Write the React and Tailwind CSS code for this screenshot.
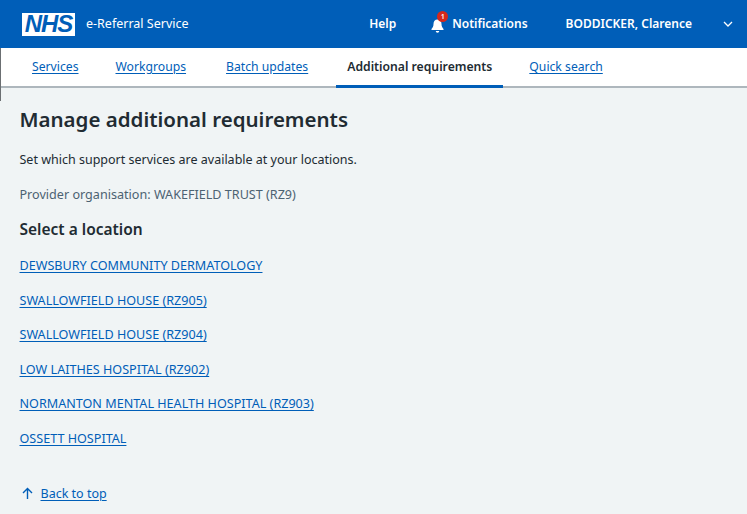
const font = { fontFamily: '"Noto Sans", sans-serif' };

const locations = [
  "DEWSBURY COMMUNITY DERMATOLOGY",
  "SWALLOWFIELD HOUSE (RZ905)",
  "SWALLOWFIELD HOUSE (RZ904)",
  "LOW LAITHES HOSPITAL (RZ902)",
  "NORMANTON MENTAL HEALTH HOSPITAL (RZ903)",
  "OSSETT HOSPITAL",
];

function Bell() {
  return (
    <span className="relative block w-[20px] h-[20px]">
      <svg width="13" height="14" viewBox="0 0 13 14" className="absolute left-0 top-[5px]" fill="#fff">
        <path d="M6.5 0.5c2.6 0 4 2 4 4.5 0 2.6 1 3.8 2 5v1H0.5v-1c1-1.200 2-2.400 2-5 0-2.500 1.400-4.500 4-4.500z" />
        <path d="M4.800 12h3.400c0 1-0.700 1.700-1.700 1.700S4.800 13 4.800 12z" />
      </svg>
      <span className="absolute left-[6px] top-[-3px] flex h-[11px] w-[11px] items-center justify-center rounded-full bg-[#d5281b] text-[7px] leading-none text-white">1</span>
    </span>
  );
}

export default function App() {
  return (
    <div className="relative h-[514px] w-[747px] overflow-hidden bg-[#f0f4f5] text-[#212b32]" style={font}>
      <div className="absolute left-0 top-[48px] h-[53px] w-px bg-[#6b6f72]" />
      <header className="flex h-[48px] items-center bg-[#005eb8] pl-[22px] text-white">
        <div className="flex h-[23px] w-[53px] items-center justify-center bg-white">
          <span className="text-[24px] font-bold italic leading-none tracking-[-1px] text-[#005eb8]" style={{ fontFamily: '"Liberation Sans", sans-serif' }}>NHS</span>
        </div>
        <span className="ml-[11px] text-[12.5px]">e-Referral Service</span>
        <nav className="ml-auto flex items-center text-[12px] font-semibold">
          <span>Help</span>
          <span className="ml-[35px] flex items-center gap-px"><Bell /><span>Notifications</span></span>
          <span className="ml-[38px]">BODDICKER, Clarence</span>
          <svg width="10" height="6" viewBox="0 0 10 6" className="ml-[31px] mr-[14px]" fill="none" stroke="#fff" strokeWidth="1.300"><path d="M1 1l4 4 4-4" /></svg>
        </nav>
      </header>
      <div className="flex h-[40px] items-stretch border-b-2 border-b-[#aeb7bd] bg-white pl-[32px] text-[12.2px]">
        <a className="mt-[10px] text-[#005eb8] underline underline-offset-2">Services</a>
        <a className="ml-[37px] mt-[10px] text-[#005eb8] underline underline-offset-2">Workgroups</a>
        <a className="ml-[40px] mt-[10px] text-[#005eb8] underline underline-offset-2">Batch updates</a>
        <span className="ml-[28px] mb-[-2px] border-b-[3px] border-[#005eb8] px-[11px] pt-[10px] font-semibold">Additional requirements</span>
        <a className="ml-[26px] mt-[10px] text-[#005eb8] underline underline-offset-2">Quick search</a>
      </div>
      <main className="pl-[19.500px] pt-[16px]">
        <h1 className="text-[20.500px] font-semibold leading-[30px]">Manage additional requirements</h1>
        <p className="mt-[17px] text-[12.500px] leading-[18px]">Set which support services are available at your locations.</p>
        <p className="mt-[17px] text-[12.600px] leading-[18px] text-[#4c6272]">Provider organisation: WAKEFIELD TRUST (RZ9)</p>
        <h2 className="mt-[13px] text-[15.500px] font-semibold leading-[24px]">Select a location</h2>
        <ul className="mt-[16px] flex flex-col gap-[16.600px]">
          {locations.map((l) => (
            <li key={l} className="text-[12.600px] leading-[18px]"><a className="text-[#005eb8] underline underline-offset-2">{l}</a></li>
          ))}
        </ul>
        <div className="mt-[37px] flex items-center text-[12.500px] leading-[18px] text-[#005eb8]">
          <svg width="13" height="13" viewBox="0 0 13 13" className="ml-[1px]" fill="none" stroke="#005eb8" strokeWidth="1.400"><path d="M6.500 12V2M2 6l4.500-4.500L11 6" /></svg>
          <a className="ml-[7px] underline underline-offset-2">Back to top</a>
        </div>
      </main>
    </div>
  );
}
